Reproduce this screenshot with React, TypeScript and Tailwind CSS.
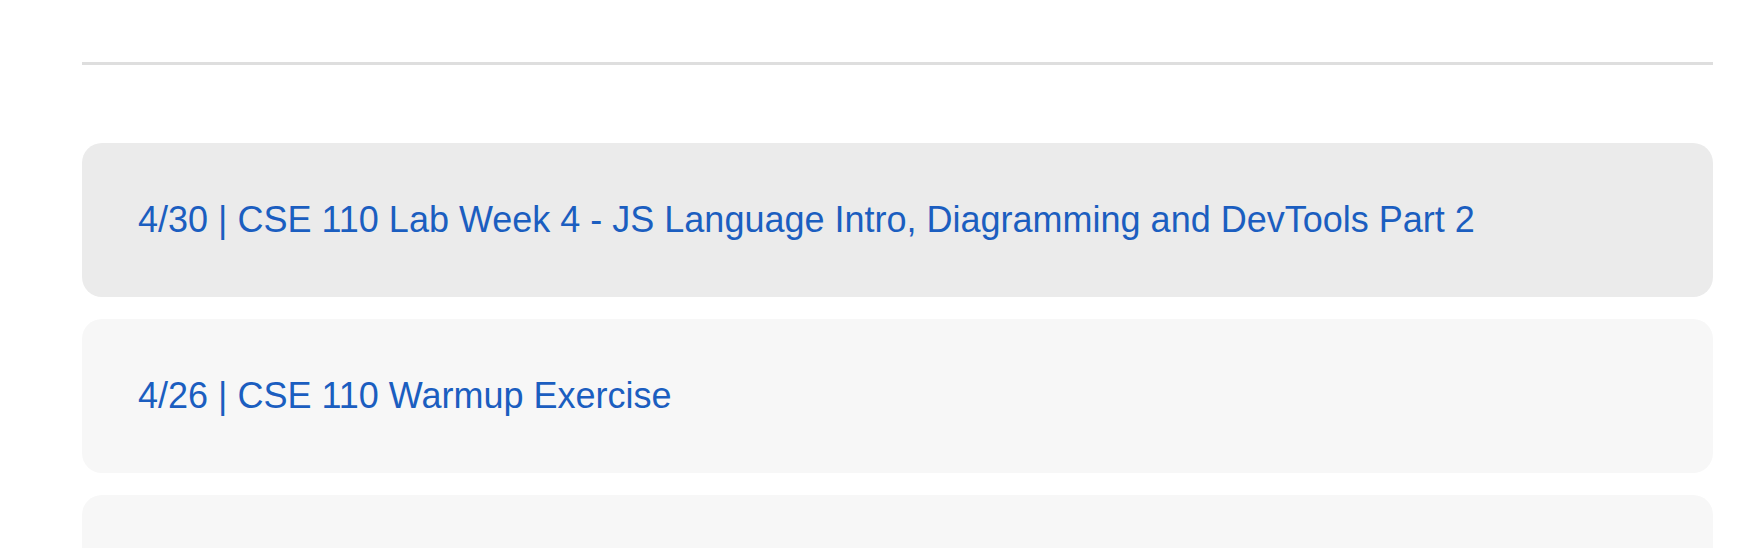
const posts = [
  { date: '4/30', title: 'CSE 110 Lab Week 4 - JS Language Intro, Diagramming and DevTools Part 2', active: true },
  { date: '4/26', title: 'CSE 110 Warmup Exercise', active: false },
  { date: '4/23', title: 'CSE 110 Lab Week 3', active: false },
];

export default function App() {
  return (
    <div className="min-h-screen bg-white font-['Liberation_Sans',Arial,sans-serif]">
      <div className="ml-[82px] w-[1631px] pt-[62px]">
        <hr className="border-0 h-[3px] bg-[#dedede]" />
        <div className="mt-[78px] flex flex-col gap-[22px]">
          {posts.map((post) => (
            <a
              key={post.date}
              href="#"
              className={`flex h-[154px] items-center rounded-[20px] px-[56px] text-[36px] text-[#1b5ec0] ${
                post.active ? 'bg-[#ebebeb]' : 'bg-[#f7f7f7]'
              }`}
            >
              {post.date} | {post.title}
            </a>
          ))}
        </div>
      </div>
    </div>
  );
}
